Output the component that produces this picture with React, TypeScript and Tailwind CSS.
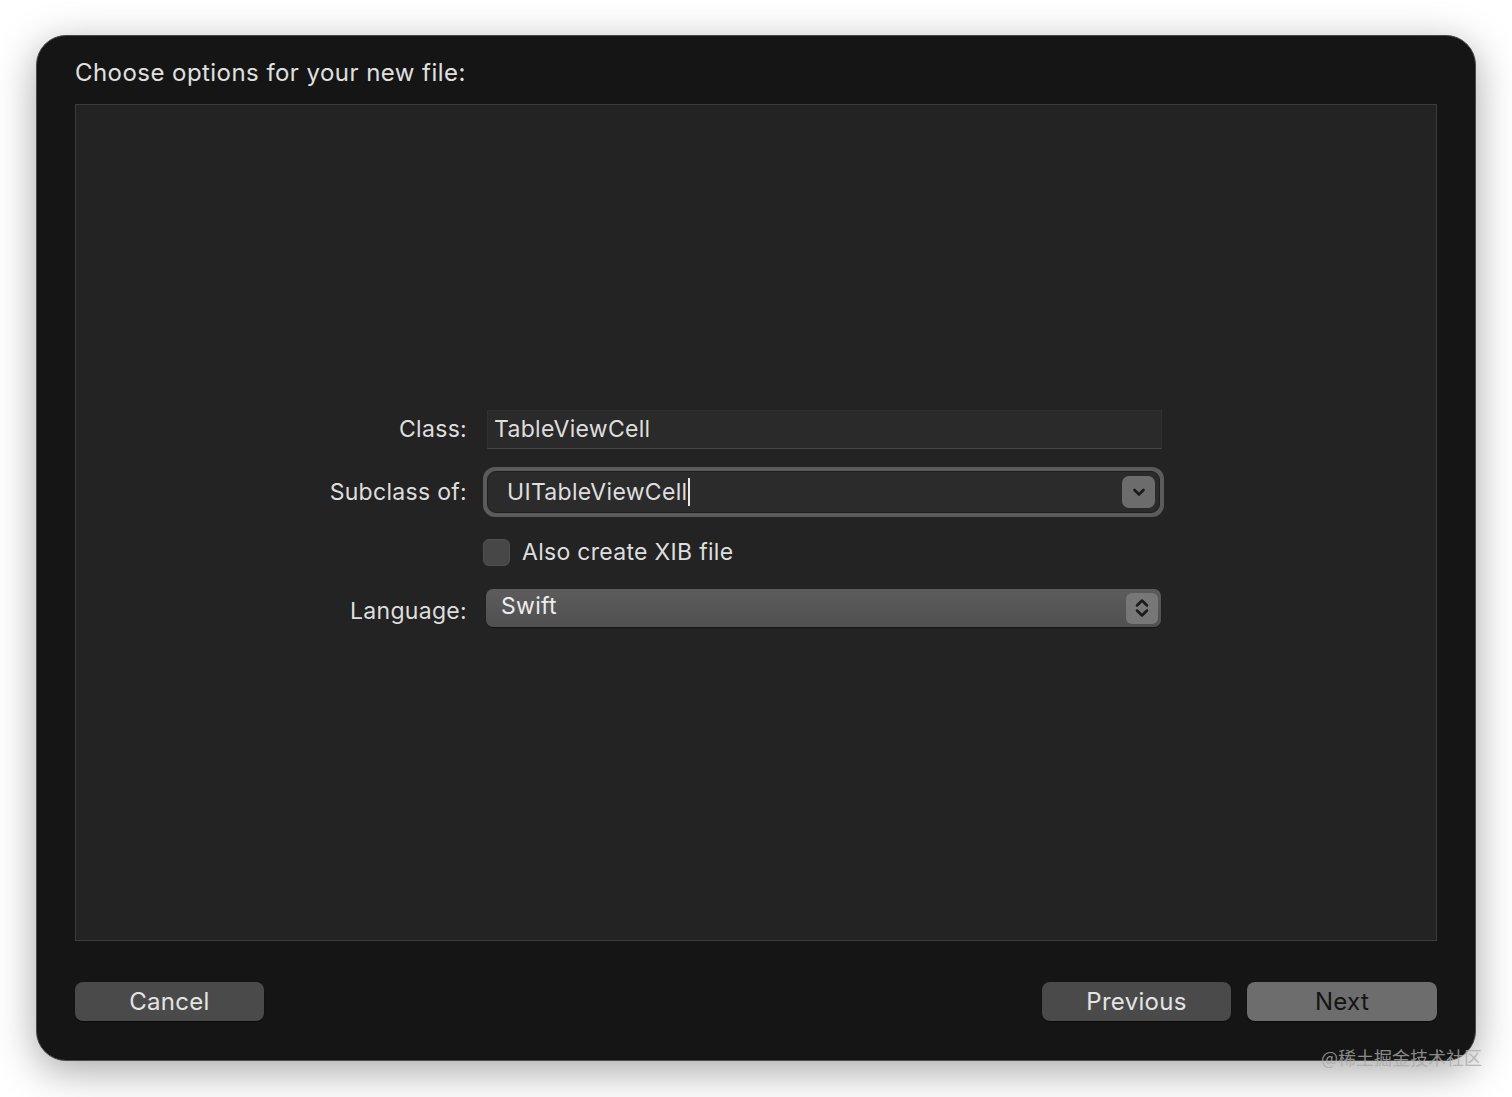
import React from 'react';

const font = { fontFamily: 'Inter, "Noto Sans", "Liberation Sans", sans-serif' };

function ChevronDown() {
  return (
    <svg width="18" height="18" viewBox="0 0 18 18" fill="none">
      <path d="M4.5 7l4.5 4.5L13.5 7" stroke="#1a1a1a" strokeWidth="2.6" strokeLinecap="round" strokeLinejoin="round" />
    </svg>
  );
}

function UpDown() {
  return (
    <svg width="18" height="26" viewBox="0 0 18 26" fill="none">
      <path d="M4 10.5L9 5.5l5 5" stroke="#1a1a1a" strokeWidth="2.5" strokeLinecap="round" strokeLinejoin="round" />
      <path d="M4 15.5L9 20.5l5-5" stroke="#1a1a1a" strokeWidth="2.5" strokeLinecap="round" strokeLinejoin="round" />
    </svg>
  );
}

export default function App() {
  return (
    <div className="relative w-[1512px] h-[1097px] bg-white overflow-hidden" style={font}>
      {/* Window */}
      <div className="absolute left-[36px] top-[35px] w-[1440px] h-[1026px] rounded-[30px] bg-[#151515] border border-[#4a4a4a] shadow-[0_10px_40px_rgba(0,0,0,0.35)] flex flex-col px-[38px]">
        <div className="h-[68px] flex items-center">
          <span className="text-[24px] text-[#e0e0e0] tracking-[0.45px] pt-[5px]">Choose options for your new file:</span>
        </div>

        {/* Options panel */}
        <div className="h-[837px] bg-[#232323] border border-[#3b3b3b] flex flex-col pt-[305px]">
          <div className="ml-[231px] grid grid-cols-[160px_680px] gap-x-[16px] items-center text-[23px] tracking-[0.3px] text-[#dedede]">
            {/* Class */}
            <div className="text-right h-[39px] leading-[39px]">Class:</div>
            <div className="ml-[4px] w-[675px] h-[39px] bg-[#2a2a2a] border-t border-t-[#2f2f2f] border-b border-b-[#474747] border-x border-x-[#303030] flex items-center px-[6px]">
              TableViewCell
            </div>

            {/* Subclass */}
            <div className="text-right mt-[18px] h-[50px] leading-[50px]">Subclass of:</div>
            <div className="mt-[18px] w-[681px] h-[50px] rounded-[12px] bg-[#5b5b5b] p-[4px]">
              <div className="h-full rounded-[9px] bg-[#2b2b2b] border border-[#1f1f1f] flex items-center pl-[19px] pr-[4px]">
                <span>UITableViewCell</span>
                <span className="w-[2px] h-[28px] bg-[#e8e8e8] ml-[1px]" />
                <div className="ml-auto w-[33px] h-[32px] rounded-[7px] bg-[#6c6c6c] flex items-center justify-center">
                  <ChevronDown />
                </div>
              </div>
            </div>

            {/* Checkbox */}
            <div className="mt-[21px] h-[29px]" />
            <div className="mt-[21px] flex items-center h-[29px]">
              <div className="w-[27px] h-[27px] rounded-[6px] bg-[#474747] border border-[#505050]" />
              <span className="ml-[12px]">Also create XIB file</span>
            </div>

            {/* Language */}
            <div className="text-right mt-[22px] h-[38px] leading-[44px]">Language:</div>
            <div className="mt-[22px] ml-[3px] w-[675px] h-[38px] rounded-[7px] bg-gradient-to-b from-[#5c5c5c] to-[#505050] flex items-center pl-[15px] pr-[3px] shadow-[0_1px_1px_rgba(0,0,0,0.4)]">
              <span className="text-[#ececec] -mt-[3px]">Swift</span>
              <div className="ml-auto w-[32px] h-[31px] rounded-[6px] bg-[#777777] flex items-center justify-center">
                <UpDown />
              </div>
            </div>
          </div>
        </div>

        {/* Buttons */}
        <div className="flex items-center mt-[41px] text-[24px] tracking-[0.3px]">
          <button className="w-[189px] h-[39px] rounded-[8px] bg-[#4a4a4a] text-[#e4e4e4] shadow-[0_1px_1px_rgba(0,0,0,0.5)]">Cancel</button>
          <button className="ml-auto w-[189px] h-[39px] rounded-[8px] bg-[#4a4a4a] text-[#e4e4e4] shadow-[0_1px_1px_rgba(0,0,0,0.5)]">Previous</button>
          <button className="ml-[16px] w-[190px] h-[39px] rounded-[8px] bg-[#6d6d6d] text-[#141414] shadow-[0_1px_1px_rgba(0,0,0,0.5)]">Next</button>
        </div>
      </div>

      {/* Watermark */}
      <div className="absolute left-[1321px] top-[1044px] text-[18px] leading-[26px] text-[rgba(170,170,170,0.8)]" style={{ fontFamily: '"Noto Sans CJK SC", "Noto Sans", sans-serif' }}>
        @稀土掘金技术社区
      </div>
    </div>
  );
}
